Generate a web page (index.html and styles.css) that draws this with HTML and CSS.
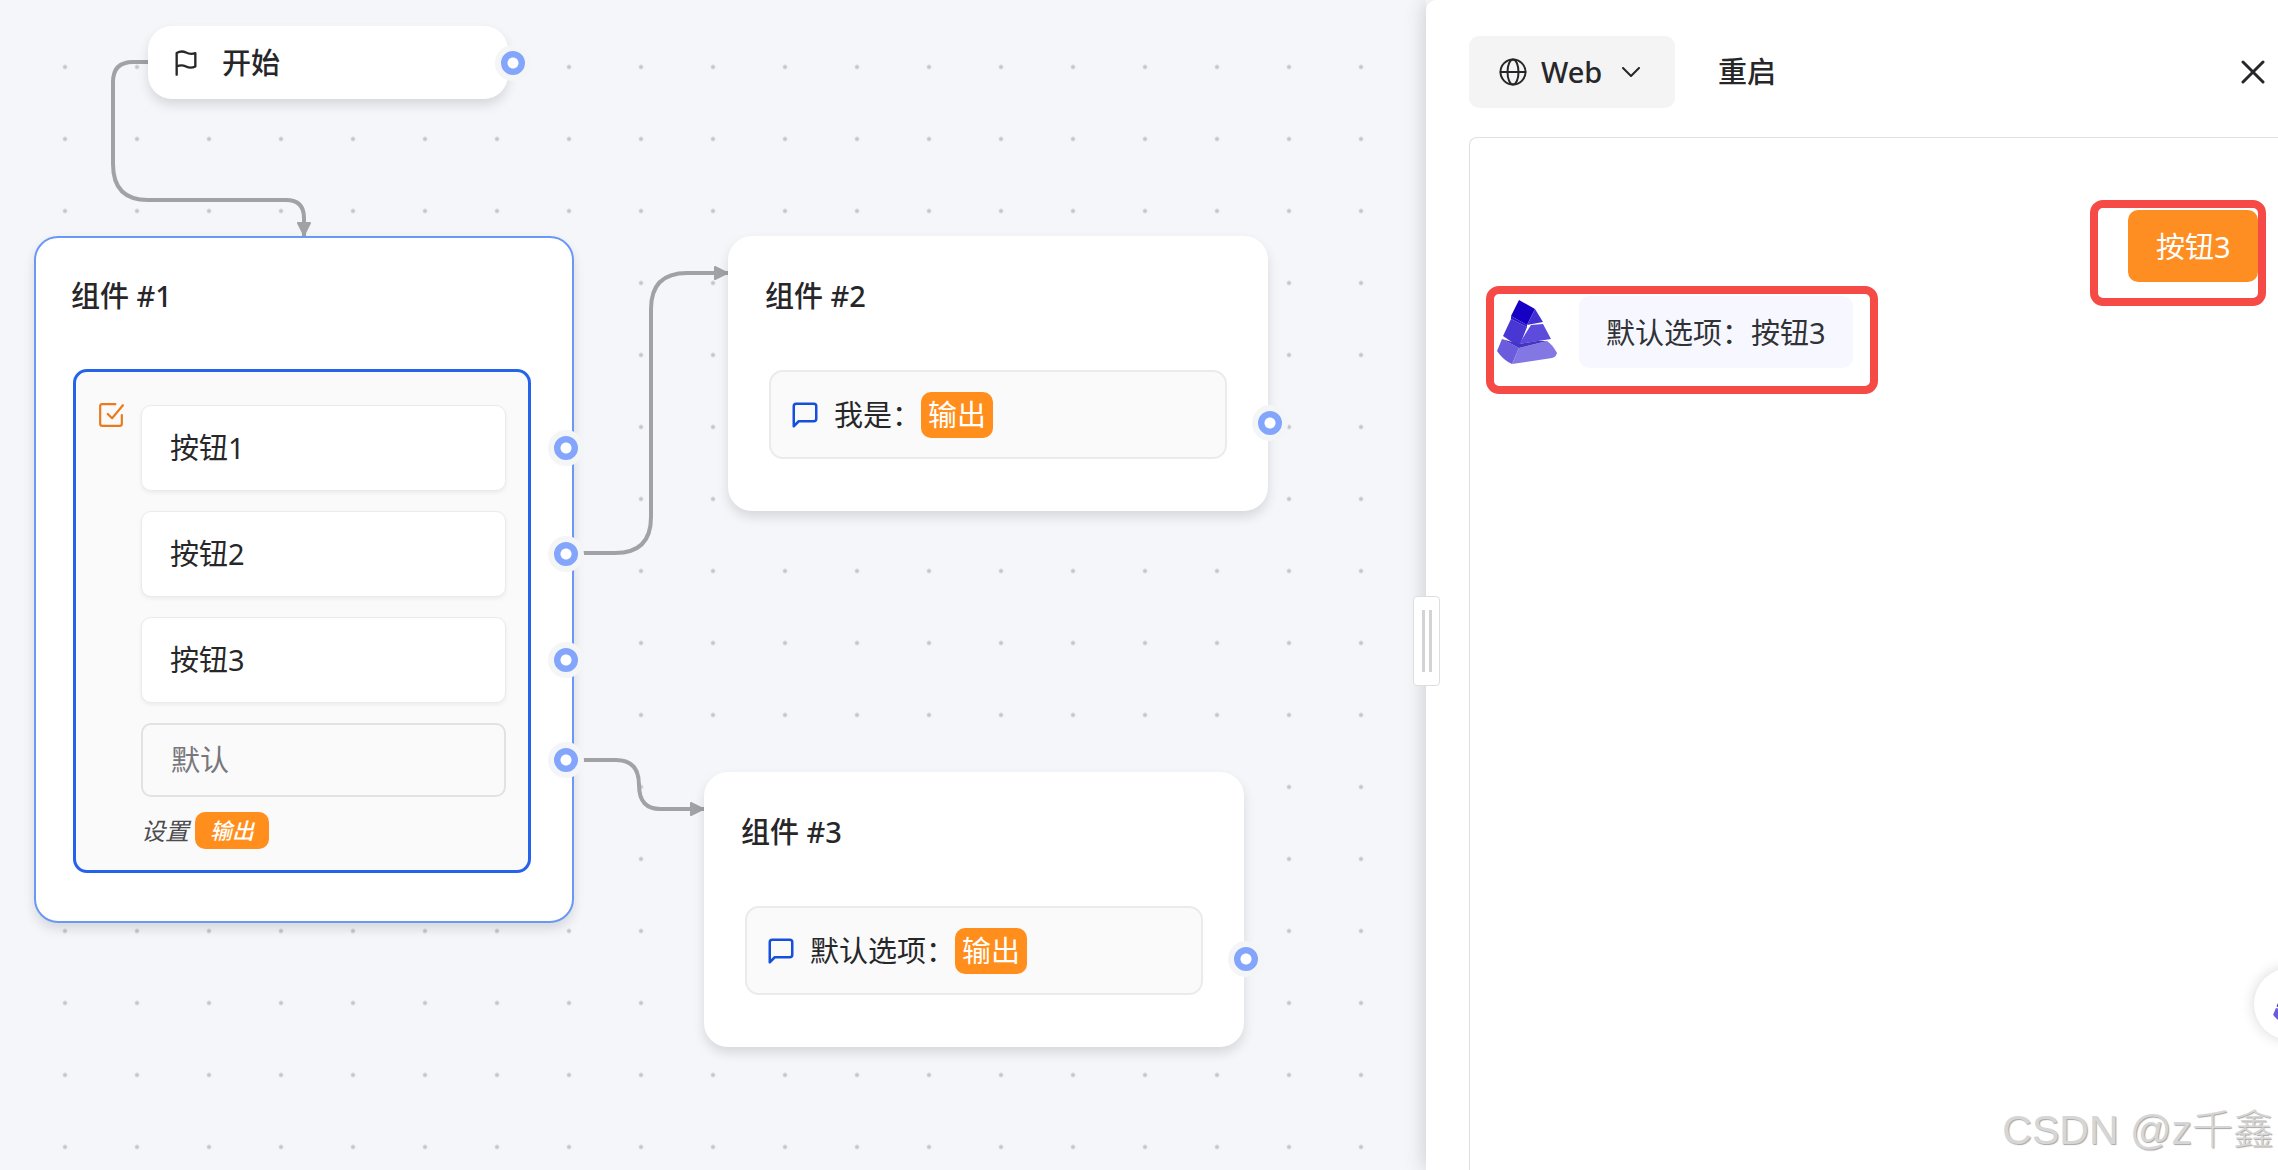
FILE: index.html
```html
<!DOCTYPE html>
<html lang="zh-CN">
<head>
<meta charset="utf-8">
<meta name="viewport" content="width=device-width, initial-scale=1">
<title>流程编辑器</title>
<link rel="stylesheet" href="styles.css">
</head>
<body>
<svg class="defs" aria-hidden="true">
  <symbol id="icon-chat" viewBox="0 0 24 24"><path d="M21 15a2 2 0 0 1-2 2H7l-4 4V5a2 2 0 0 1 2-2h14a2 2 0 0 1 2 2z"/></symbol>
  <symbol id="pyramid" viewBox="0 0 60 64">
    <path fill="#1500c4" d="M22 0 38 9 30 25 14 16Z"/>
    <path fill="#4330d2" d="M38 9 46 22 30 25Z"/>
    <path fill="#4937d4" d="M14 19 30 27 22 47 6 36Z"/>
    <path fill="#5d4cdc" d="M34 25 46 24 54 39 22 44Z"/>
    <path fill="#2b18c8" d="M14 16 30 25 30 27 14 19Z"/>
    <path fill="#6a5cdc" d="M5 39 22 48 15 64Q6 60 0 51Z"/>
    <path fill="#8377e4" d="M22 48 50 41Q55 44 60 53 59 57 55 58L15 64Z"/>
    <path fill="#4434c4" d="M5 39 22 48 50 41 40 41 22 44Z"/>
  </symbol>
</svg>
<div class="app">
  <main class="canvas">
    <svg class="edges" aria-hidden="true">
      <defs>
        <marker id="arrow" markerUnits="userSpaceOnUse" markerWidth="18" markerHeight="18" refX="15" refY="8" orient="auto">
          <path d="M2 2 14 8 2 14Z" fill="#a1a2a6" stroke="#a1a2a6" stroke-width="2" stroke-linejoin="round"/>
        </marker>
      </defs>
      <path d="M150 62H133Q113 62 113 82V164Q113 200 148 200H286Q304 200 304 218V236" marker-end="url(#arrow)"/>
      <path d="M582 553H615Q651 553 651 517V309Q651 273 687 273H728" marker-end="url(#arrow)"/>
      <path d="M582 760H616Q639 760 639 785T662 809H704" marker-end="url(#arrow)"/>
    </svg>

    <section class="node node-start">
      <svg class="icon" viewBox="0 0 24 24" aria-hidden="true"><path d="M4 22V3.500Q8 1 12 3T20 3.500V15Q16 17 12 15T4 15"/></svg>
      <h2 class="node-title">开始</h2>
      <span class="port"></span>
    </section>

    <section class="node node-one">
      <h2 class="node-title">组件 #1</h2>
      <div class="block choices">
        <svg class="icon icon-check" viewBox="0 0 24 24" aria-hidden="true"><path d="M16 2H4a2 2 0 0 0-2 2v16a2 2 0 0 0 2 2h16a2 2 0 0 0 2-2v-8M9 11l4 4L23 3"/></svg>
        <div class="options">
          <div class="option-row"><button class="option" type="button">按钮1</button><span class="port"></span></div>
          <div class="option-row"><button class="option" type="button">按钮2</button><span class="port"></span></div>
          <div class="option-row"><button class="option" type="button">按钮3</button><span class="port"></span></div>
          <div class="option-row"><button class="option option-default" type="button">默认</button><span class="port"></span></div>
          <p class="assign">设置<span class="tag tag-small">输出</span></p>
        </div>
      </div>
    </section>

    <section class="node node-two">
      <h2 class="node-title">组件 #2</h2>
      <div class="block message">
        <svg class="icon icon-chat" aria-hidden="true"><use href="#icon-chat"/></svg>
        <p class="message-text">我是：<span class="tag">输出</span></p>
      </div>
      <span class="port"></span>
    </section>

    <section class="node node-three">
      <h2 class="node-title">组件 #3</h2>
      <div class="block message">
        <svg class="icon icon-chat" aria-hidden="true"><use href="#icon-chat"/></svg>
        <p class="message-text">默认选项：<span class="tag">输出</span></p>
      </div>
      <span class="port"></span>
    </section>
  </main>

  <aside class="panel">
    <button class="resizer" type="button" aria-label="调整宽度"></button>
    <header class="toolbar">
      <button class="runtime" type="button">
        <svg class="globe" viewBox="0 0 28 28" aria-hidden="true"><circle cx="14" cy="14" r="12.500"/><ellipse cx="14" cy="14" rx="5.500" ry="12.500"/><path d="M1.500 14h25"/></svg>
        Web
        <svg class="chevron" viewBox="0 0 18 10" aria-hidden="true"><path d="M1 1l8 8 8-8"/></svg>
      </button>
      <button class="restart" type="button">重启</button>
      <button class="close" type="button" aria-label="关闭"><svg viewBox="0 0 24 24" aria-hidden="true"><path d="M2 2l20 20M22 2 2 22"/></svg></button>
    </header>
    <div class="chat">
      <div class="callout callout-user"><p class="bubble bubble-user">按钮3</p></div>
      <div class="callout callout-bot">
        <svg class="avatar" aria-hidden="true"><use href="#pyramid"/></svg>
        <p class="bubble bubble-bot">默认选项：按钮3</p>
      </div>
    </div>
    <button class="launcher" type="button" aria-label="打开聊天"><svg aria-hidden="true"><use href="#pyramid"/></svg></button>
    <span class="watermark">CSDN @z千鑫</span>
  </aside>
</div>
</body>
</html>
```
FILE: styles.css
```css
*, *::before, *::after { box-sizing: border-box; }

body {
  margin: 0;
  font-family: "Noto Sans", "Noto Sans CJK SC", sans-serif;
  font-size: 29px;
  line-height: 40px;
  color: #27272a;
}

h2, p { margin: 0; }

button {
  margin: 0;
  padding: 0;
  border: 0;
  background: none;
  font: inherit;
  color: inherit;
}

svg { fill: none; }
.defs { position: absolute; width: 0; height: 0; }

.app {
  display: grid;
  grid-template-columns: minmax(0, 1426fr) minmax(0, 852fr);
  min-height: 100vh;
  overflow: hidden;
}

/* Flow canvas */
.canvas {
  position: relative;
  overflow: hidden;
  background: #f4f6fa radial-gradient(circle at 36px 36px, #c4c6ca 1px, transparent 3px) 29px 31px / 72px 72px;
}

.edges {
  position: absolute;
  inset: 0;
  width: 100%;
  height: 100%;
  stroke: #a1a2a6;
  stroke-width: 4px;
}

.node {
  position: absolute;
  width: 540px;
  padding: 40px 37px 52px;
  border-radius: 24px;
  background: #fff;
  box-shadow: 0 6px 12px rgba(0, 0, 0, .12);
}

.node-title {
  font-size: 29px;
  line-height: 40px;
  font-weight: 500;
}

.node-start {
  left: 148px;
  top: 26px;
  display: flex;
  align-items: center;
  gap: 22px;
  width: 360px;
  height: 73px;
  padding: 0 24px;
}
.node-one { left: 34px; top: 236px; padding: 38px 39px 48px 35px; border: 2px solid #6b98f6; }
.node-two { left: 728px; top: 236px; }
.node-three { left: 704px; top: 772px; }

.icon {
  flex: none;
  width: 28px;
  height: 28px;
  stroke: currentColor;
  stroke-width: 2px;
  stroke-linecap: round;
  stroke-linejoin: round;
}
.icon-check { width: 26px; height: 26px; margin-top: -3px; color: #ea7a1c; }
.icon-chat { width: 30px; height: 30px; color: #1550dc; }

.block {
  display: flex;
  margin-top: 54px;
  border: 2px solid #ebebed;
  border-radius: 14px;
  background: #fafafa;
}
.choices {
  gap: 17px;
  margin: 53px 2px 0;
  padding: 33px 22px 21px;
  border: 3px solid #2563eb;
}
.message {
  align-items: center;
  gap: 14px;
  height: 89px;
  margin-right: 4px;
  margin-left: 4px;
  padding: 0 19px;
}
.message-text { display: flex; align-items: center; }

.options { flex: 1; display: flex; flex-direction: column; gap: 20px; }
.option-row { position: relative; }
.option {
  display: block;
  width: 100%;
  height: 86px;
  padding: 0 28px;
  border: 1px solid #ebebec;
  border-radius: 10px;
  background: #fff;
  box-shadow: 0 2px 4px rgba(0, 0, 0, .06);
  text-align: left;
}
.option-default {
  height: 74px;
  border: 2px solid #e2e2e4;
  background: #fafafa;
  box-shadow: none;
  color: #77777c;
}

.tag {
  padding: 3px 7px;
  border-radius: 10px;
  background: #ff8e1c;
  color: #fff;
}
.assign {
  display: flex;
  align-items: center;
  gap: 6px;
  margin-top: -5px;
  font-size: 24px;
  font-style: italic;
  line-height: 37px;
  color: #4b4b50;
}
.tag-small { padding: 0 15px; font-size: 22px; font-weight: 500; }

.port {
  position: absolute;
  top: 50%;
  right: -78px;
  width: 36px;
  height: 36px;
  margin-top: -18px;
  border: 6px solid #f4f5f7;
  border-radius: 50%;
  background: radial-gradient(circle, #fff 5px, #83a5fc 6px);
}
.node > .port { right: -20px; }
.node-start > .port { right: -23px; }
.node-two > .port, .node-three > .port { top: 187px; }

/* Preview panel */
.panel {
  position: relative;
  display: flex;
  flex-direction: column;
  padding: 36px 0 0 43px;
  border-top-left-radius: 10px;
  background: #fff;
  box-shadow: -2px 0 20px rgba(0, 0, 0, .16);
}

.resizer {
  position: absolute;
  left: -13px;
  top: 596px;
  display: flex;
  justify-content: center;
  width: 27px;
  height: 90px;
  padding: 13px 0;
  border: 1px solid #dededf;
  border-radius: 4px;
  background: #fff;
}
.resizer::before {
  content: "";
  width: 10px;
  height: 62px;
  border: solid #d3d3d5;
  border-width: 0 3px;
}

.toolbar { display: flex; align-items: center; height: 72px; font-weight: 500; }
.runtime {
  display: flex;
  align-items: center;
  width: 206px;
  height: 72px;
  padding: 0 35px 0 30px;
  border-radius: 10px;
  background: #f4f4f4;
}
.globe, .chevron { stroke: currentColor; stroke-width: 2px; stroke-linecap: round; stroke-linejoin: round; }
.globe { width: 28px; height: 28px; margin-right: 14px; }
.chevron { width: 18px; height: 10px; margin-left: auto; }
.restart { margin-left: 43px; }
.close { width: 24px; height: 24px; margin: 0 13px 0 auto; }
.close svg { display: block; stroke: currentColor; stroke-width: 3px; stroke-linecap: round; }

.chat {
  flex: 1;
  display: flex;
  flex-direction: column;
  margin-top: 29px;
  padding: 62px 12px 0 16px;
  border: 1px solid #e0e0e2;
  border-width: 1px 0 0 1px;
  border-top-left-radius: 8px;
}
.callout { display: flex; border: 8px solid #f54a45; border-radius: 13px; }
.callout-user { align-self: flex-end; width: 176px; height: 106px; padding-top: 2px; justify-content: flex-end; }
.callout-bot { width: 392px; height: 108px; margin-top: -20px; padding: 2px 17px 0 3px; }
.avatar { width: 60px; height: 64px; margin-top: 4px; }
.bubble { height: 72px; padding: 0 28px; border-radius: 10px; line-height: 73px; white-space: nowrap; }
.bubble-user { width: 130px; background: #ff8e22; color: #fff; }
.bubble-bot { width: 274px; margin-left: auto; padding: 0 27px; background: #f7f8ff; color: #303235; }

.launcher {
  position: absolute;
  right: -48px;
  bottom: 130px;
  display: grid;
  place-items: center;
  width: 72px;
  height: 72px;
  border-radius: 50%;
  background: #fff;
  box-shadow: 0 0 14px rgba(0, 0, 0, .16);
}
.launcher svg { width: 34px; height: 36px; }

.watermark {
  position: absolute;
  right: 4px;
  bottom: 10px;
  font-family: "Liberation Sans", "Noto Sans CJK SC", sans-serif;
  font-size: 41px;
  font-weight: 300;
  line-height: 60px;
  color: #d6d6d6;
  text-shadow: 1px 1px 1px #a6a6a6;
  white-space: nowrap;
}
```
